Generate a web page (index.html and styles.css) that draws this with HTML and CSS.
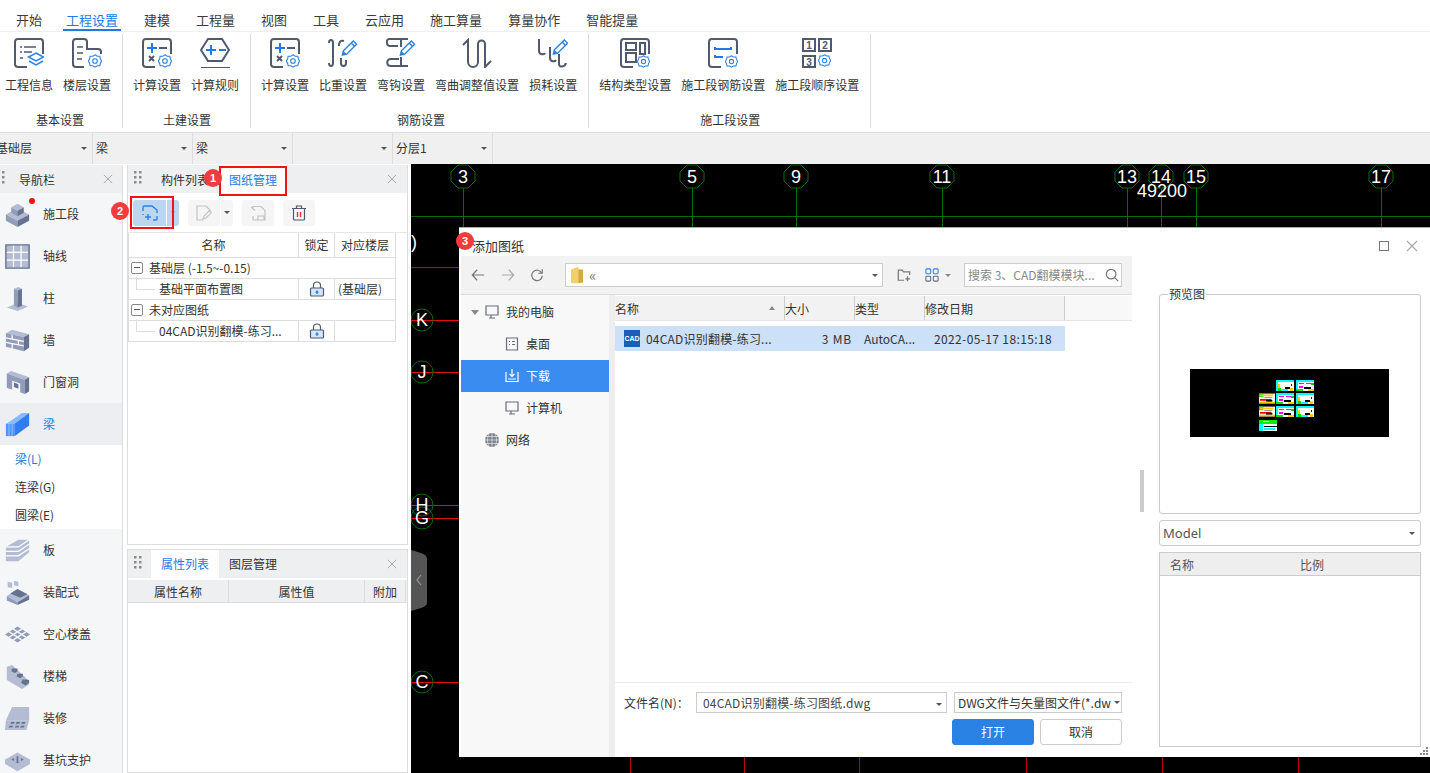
FILE: index.html
```html
<!DOCTYPE html>
<html lang="zh-CN">
<head>
<meta charset="utf-8">
<title>工程设置</title>
<link rel="stylesheet" href="styles.css">
</head>
<body>
<svg class="defs" aria-hidden="true">
  <symbol id="gear" viewBox="0 0 14 14">
    <polygon class="gr" points="7,.8 9.2,2.2 11.8,2.2 12.4,4.7 13.6,7 12.4,9.3 11.8,11.8 9.2,11.8 7,13.2 4.8,11.8 2.2,11.8 1.6,9.3 .4,7 1.6,4.7 2.2,2.2 4.8,2.2"/>
    <circle class="gr" cx="7" cy="7" r="2.3"/>
  </symbol>
  <symbol id="pencil" viewBox="0 0 18 18">
    <path class="pn" d="M13 1.500l3.500 3.500L6 15.500 1.500 16.500 2.500 12z"/>
    <path class="pn" d="M10.800 3.700l3.500 3.500"/>
    <path class="pf" d="M1.500 16.500l1-4.500 3.500 3.500z"/>
  </symbol>
  <symbol id="lock" viewBox="0 0 16 16">
    <path class="lk" d="M4.500 7V4.500a3.500 3.500 0 0 1 7 0V7"/>
    <rect class="lkb" x="1.500" y="7" width="13" height="8" rx="1"/>
    <path class="lka" d="M8 9l2 2.500H8.700V13H7.300v-1.500H6z"/>
  </symbol>
  <symbol id="dots" viewBox="0 0 8 16">
    <path class="dt" d="M0 0h2.500v2.500H0zM5 0h2.500v2.500H5zM0 5h2.500v2.500H0zM5 5h2.500v2.500H5zM0 10h2.500v2.500H0zM5 10h2.500v2.500H5z"/>
  </symbol>
  <symbol id="cross" viewBox="0 0 12 12"><path class="cr" d="M1 1l10 10M11 1L1 11"/></symbol>
  <symbol id="thumbA" viewBox="0 0 18 11">
    <rect width="18" height="11" fill="#fff"/><rect width="18" height="2" fill="#0ff"/><rect y="2" width="2" height="9" fill="#0ff"/><rect y="9" width="12" height="2" fill="#0ff"/><rect x="2" y="4" width="2" height="5" fill="#fc0"/><rect x="2" y="8" width="3" height="3" fill="#0d0"/><rect x="9" y="7" width="5" height="2" fill="#000"/><rect x="14" y="8" width="3" height="3" fill="#fc0"/><rect x="15" y="4" width="1" height="2" fill="#00f"/>
  </symbol>
  <symbol id="thumbB" viewBox="0 0 18 11">
    <rect width="18" height="11" fill="#fff"/><rect width="18" height="2" fill="#0ff"/><rect y="2" width="2" height="7" fill="#0ff"/><rect x="3" y="3" width="5" height="1" fill="#f0f"/><rect x="10" y="3" width="5" height="1" fill="#f0f"/><rect x="3" y="6" width="4" height="2" fill="#f0f"/><rect x="8" y="7" width="7" height="2" fill="#000"/><rect x="12" y="9" width="6" height="2" fill="#fc0"/><rect y="9" width="7" height="2" fill="#0d0"/><rect x="15" y="3" width="3" height="2" fill="#0c0"/>
  </symbol>
  <symbol id="thumbC" viewBox="0 0 18 11">
    <rect width="18" height="11" fill="#fff"/><rect width="5" height="4" fill="#0e0"/><rect x="1" y="1" width="15" height="2" fill="#fc0"/><rect x="6" y="4" width="9" height="1" fill="#888"/><rect x="1" y="6" width="13" height="2" fill="#f00"/><rect y="9" width="18" height="2" fill="#fc0"/><rect x="8" y="7" width="7" height="2" fill="#000"/>
  </symbol>
  <symbol id="thumbD" viewBox="0 0 18 11">
    <rect width="18" height="11" fill="#fff"/><rect width="18" height="4" fill="#0e0"/><rect x="4" y="1" width="6" height="1" fill="#fff"/><rect y="4" width="4" height="7" fill="#0ff"/><rect x="5" y="6" width="13" height="1" fill="#000"/><rect x="5" y="8" width="11" height="2" fill="#0ff"/>
  </symbol>
</svg>

<nav class="tabs">
  <span class="tab tab-first">开始</span>
  <span class="tab tab-on">工程设置</span>
  <span class="tab">建模</span>
  <span class="tab">工程量</span>
  <span class="tab">视图</span>
  <span class="tab">工具</span>
  <span class="tab">云应用</span>
  <span class="tab">施工算量</span>
  <span class="tab">算量协作</span>
  <span class="tab">智能提量</span>
</nav>

<section class="ribbon">
  <div class="group group-first">
    <div class="items">
      <div class="item"><svg class="ic" viewBox="0 0 30 30"><path class="st" d="M13 29H4a3 3 0 0 1-3-3V4a3 3 0 0 1 3-3h22a3 3 0 0 1 3 3v12"/><path class="st1" d="M6 9h2M10 9h12M6 14h2M10 14h8M6 20h3"/><path class="bl" d="M22 15l7.500 4-7.500 4-7.500-4zM15 23l7 4 7-4"/></svg><span>工程信息</span></div>
      <div class="item"><svg class="ic" viewBox="0 0 30 30"><path class="st" d="M12 29H4a3 3 0 0 1-3-3V4a3 3 0 0 1 3-3h8a3 3 0 0 1 3 3v7h11a3 3 0 0 1 3 3v2"/><path class="st1" d="M5 9h6M5 15h6M5 21h5"/><use href="#gear" x="16" y="16" width="14" height="14"/></svg><span>楼层设置</span></div>
    </div>
    <div class="gtitle gtitle-wide">基本设置</div>
  </div>
  <div class="group">
    <div class="items">
      <div class="item"><svg class="ic" viewBox="0 0 30 30"><path class="st" d="M13 29H4a3 3 0 0 1-3-3V4a3 3 0 0 1 3-3h22a3 3 0 0 1 3 3v12"/><path class="bl2" d="M10 5v10M5 10h10"/><path class="st" d="M17 10h8M7 18l5 5M12 18l-5 5"/><use href="#gear" x="16" y="16" width="14" height="14"/></svg><span>计算设置</span></div>
      <div class="item"><svg class="ic" viewBox="0 0 30 30"><path class="st" d="M8 1h14l7 11-7 11H8L1 12zM1 30h29"/><path class="bl2" d="M11 7v10M6 12h10M19 12h7"/></svg><span>计算规则</span></div>
    </div>
    <div class="gtitle">土建设置</div>
  </div>
  <div class="group">
    <div class="items">
      <div class="item"><svg class="ic" viewBox="0 0 30 30"><path class="st" d="M13 29H4a3 3 0 0 1-3-3V4a3 3 0 0 1 3-3h22a3 3 0 0 1 3 3v12"/><path class="bl2" d="M10 5v10M5 10h10"/><path class="st" d="M17 10h8M7 18l5 5M12 18l-5 5"/><use href="#gear" x="16" y="16" width="14" height="14"/></svg><span>计算设置</span></div>
      <div class="item"><svg class="ic" viewBox="0 0 30 30"><path class="st" d="M1 5C1 1 5 1 5 5V25C5 29 1 29 1 25M11 8C11 3 13 2 16 3M13 20V25C13 29 18 29 18 25V22"/><use href="#pencil" x="13" y="1" width="17" height="18"/></svg><span>比重设置</span></div>
      <div class="item"><svg class="ic" viewBox="0 0 30 30"><path class="st" d="M22 1H3C0 1 0 8 4 8H12M15 1V9M13 21H5C0 21 0 28 5 28H22M15 19V28"/><use href="#pencil" x="13" y="1" width="17" height="18"/></svg><span>弯钩设置</span></div>
      <div class="item"><svg class="ic" viewBox="0 0 30 30"><path class="st" d="M1 7L6 2V24a5 5 0 0 0 10 0V6a3.500 3.500 0 0 1 7 0V29L29 23"/></svg><span>弯曲调整值设置</span></div>
      <div class="item"><svg class="ic" viewBox="0 0 30 30"><path class="st" d="M1 1V13C1 17 6 17 7 15M12 9V20C12 24 17 24 18 22M21 16V26C21 30 27 29 28 25"/><use href="#pencil" x="14" y="0" width="17" height="18"/></svg><span>损耗设置</span></div>
    </div>
    <div class="gtitle gtitle-wide">钢筋设置</div>
  </div>
  <div class="group">
    <div class="items">
      <div class="item"><svg class="ic" viewBox="0 0 30 30"><path class="st" d="M13 29H4a3 3 0 0 1-3-3V4a3 3 0 0 1 3-3h22a3 3 0 0 1 3 3v12"/><rect class="st" x="6" y="5" width="10" height="7"/><rect class="st" x="20" y="5" width="5" height="11"/><rect class="st" x="6" y="15" width="10" height="9"/><use href="#gear" x="17" y="17" width="13" height="13"/></svg><span>结构类型设置</span></div>
      <div class="item"><svg class="ic" viewBox="0 0 30 30"><path class="st" d="M13 29H4a3 3 0 0 1-3-3V4a3 3 0 0 1 3-3h22a3 3 0 0 1 3 3v12"/><path class="bl2" d="M7 9v2h16V9M7 17v2h8"/><use href="#gear" x="17" y="17" width="13" height="13"/></svg><span>施工段钢筋设置</span></div>
      <div class="item"><svg class="ic" viewBox="0 0 30 30"><rect class="st" x="1" y="1" width="12" height="12"/><rect class="st" x="17" y="1" width="12" height="12"/><rect class="st" x="1" y="18" width="12" height="11"/><text class="n" x="7" y="11">1</text><text class="n" x="23" y="11">2</text><text class="n" x="7" y="28">3</text><use href="#gear" x="16" y="16" width="13" height="13"/></svg><span>施工段顺序设置</span></div>
    </div>
    <div class="gtitle">施工段设置</div>
  </div>
</section>

<section class="selects">
  <div class="sel">基础层<i class="arr"></i></div>
  <div class="sel">梁<i class="arr"></i></div>
  <div class="sel">梁<i class="arr"></i></div>
  <div class="sel"><i class="arr"></i></div>
  <div class="sel">分层1<i class="arr"></i></div>
</section>

<main class="main">
  <aside class="nav">
    <header class="nav-head">
      <svg class="grip grip-nav"><use href="#dots"/></svg>
      <span class="nav-title">导航栏</span>
      <svg class="x"><use href="#cross"/></svg>
    </header>
    <div class="nav-item"><svg class="ni" viewBox="0 0 28 28"><path class="a" d="M1 14l13-7 13 7-13 7z"/><path class="b" d="M1 14v7l13 7v-7z"/><path class="c" d="M27 14v7l-13 7v-7z"/><path class="a" d="M7 6l7-4 7 4-7 4z"/><path class="b" d="M7 6v6l7 4v-6z"/><path class="c" d="M21 6v6l-7 4v-6z"/></svg><span>施工段</span></div>
    <div class="nav-item"><svg class="ni" viewBox="0 0 28 28"><rect class="a" x="1" y="1" width="26" height="26"/><path class="w" d="M1 9.500h25M1 18h25M9.500 1v25M18 1v25"/><path class="c2" d="M1 1h26v26H1z"/></svg><span>轴线</span></div>
    <div class="nav-item"><svg class="ni" viewBox="0 0 28 28"><path class="a" d="M2 24l12-5 12 4-12 5z"/><path class="a" d="M10 3l5-2 4 2-5 2z"/><path class="b" d="M10 3l4 2v19l-4-2z"/><path class="c" d="M14 5l5-2v19l-5 2z"/></svg><span>柱</span></div>
    <div class="nav-item"><svg class="ni" viewBox="0 0 28 28"><path class="a" d="M1 6l7-4 19 5-6 3z"/><path class="b" d="M1 6l20 4v16L1 21z"/><path class="c" d="M27 7v15l-6 4V10z"/><path class="w" d="M1 11l20 4M1 16l20 4M8 8v4.500M15 14v5M8 18v5"/></svg><span>墙</span></div>
    <div class="nav-item"><svg class="ni" viewBox="0 0 28 28"><path class="a" d="M2 4l5-3 20 7-5 3z"/><path class="b" d="M2 4l20 7v16l-5-2V15l-9-3v10l-6-2z"/><path class="c" d="M27 8v16l-5 3V11z"/><path class="c" d="M10 14l5 2v5l-5-2z"/></svg><span>门窗洞</span></div>
    <div class="nav-item nav-on"><svg class="ni" viewBox="0 0 28 28"><path class="bb" d="M2 13L19 1h8L11 13z"/><path class="bc" d="M1 13h10v14H1z"/><path class="bd" d="M11 13L27 1v14L11 27z"/><path class="w1" d="M4.500 13v14M8 13v14"/></svg><span>梁</span></div>
    <ul class="sub">
      <li class="sub-on">梁(L)</li>
      <li>连梁(G)</li>
      <li>圆梁(E)</li>
    </ul>
    <div class="nav-item"><svg class="ni" viewBox="0 0 28 28"><path class="a" d="M1 10L15 2h12v14L15 26H1z"/><path class="w" d="M1 15h14L27 7M1 20h14L27 12M1 10h14L27 2"/></svg><span>板</span></div>
    <div class="nav-item"><svg class="ni" viewBox="0 0 28 28"><path class="a" d="M2 18l12-8 13 7-13 8z"/><path class="c" d="M6 15l8-5 11 6-8 4z"/><path class="b" d="M2 18v5l12 5v-3z"/><path class="c" d="M27 17v5l-13 6v-3z"/><path class="a" d="M3 2l5 1v6l-5-1zM10 1l5 1v5l-5-1z"/></svg><span>装配式</span></div>
    <div class="nav-item"><svg class="ni" viewBox="0 0 28 28"><path class="b" d="M0 14L14 5l14 9-14 9z"/><path class="w2" d="M4.700 11l14 9M9.300 8l14 9M4.700 17l14-9M9.300 20l14-9"/></svg><span>空心楼盖</span></div>
    <div class="nav-item"><svg class="ni" viewBox="0 0 28 28"><path class="a" d="M2 3l6-2 19 18v4l-8 5L2 18z"/><path class="c" d="M8 5l6 0v3l-3 2-4-2zM14 11l6 0v3l-3 2-4-2zM20 17l7 1v3l-4 3-5-3z"/></svg><span>楼梯</span></div>
    <div class="nav-item"><svg class="ni" viewBox="0 0 28 28"><path class="a" d="M8 1h19v15H1z"/><path class="a" d="M1 16h26l-3 11H0z"/><path class="c" d="M7 18h4l-1 2H6zM13 18h4l-1 2h-4zM19 18h4l-1 2h-4zM5 22h4l-1 2H4zM12 22h4l-1 2h-4zM18 22h4l-1 2h-4z"/></svg><span>装修</span></div>
    <div class="nav-item"><svg class="ni" viewBox="0 0 28 28"><path class="a" d="M0 13L14 5l14 8v5l-14 8L0 18z"/><path class="c" d="M7 13l7-4 7 4-7 4z"/><path class="a" d="M10 9h3v7h-3zM15 9h3v7h-3z"/></svg><span>基坑支护</span></div>
  </aside>

  <div class="side">
    <section class="panel panel-top">
      <header class="phead">
        <svg class="grip"><use href="#dots"/></svg>
        <span class="ptab ptab-plain">构件列表</span>
        <span class="ptab ptab-on ptab-drawing">图纸管理</span>
        <svg class="x x-push"><use href="#cross"/></svg>
      </header>
      <div class="ptools">
        <button class="tbtn tbtn-on"><svg class="ti" viewBox="0 0 16 16"><path class="bl1" d="M1 6V2.500A1.500 1.500 0 0 1 2.500 1H10l5 4v3M15 11v3a1 1 0 0 1-1 1h-3M1 9v1M6 9v6M3 12h6"/></svg><i class="tdiv"></i><i class="arr arr-blue"></i></button>
        <button class="tbtn tbtn-split"><svg class="ti" viewBox="0 0 16 16"><path class="gy" d="M7 15H1V1h9l4 4v2M7 14l1-3 5.500-5.500 2 2L10 13z"/></svg><i class="tdiv"></i><i class="arr"></i></button>
        <button class="tbtn tbtn-icon"><svg class="ti" viewBox="0 0 16 16"><path class="gy" d="M3 5V1.500h8l4 4V15H3v-4M1 2l4 3.500M8 11h6v4H8z"/></svg></button>
        <button class="tbtn tbtn-icon"><svg class="ti" viewBox="0 0 16 16"><path class="dk" d="M1 3.500h14M5.500 3.500V1h5v2.500M2.500 3.500V14a1 1 0 0 0 1 1h9a1 1 0 0 0 1-1V3.500"/><path class="rd" d="M6.500 7v5M9.500 7v5"/></svg></button>
      </div>
      <div class="dtable">
        <div class="dr dr-head"><span>名称</span><span>锁定</span><span>对应楼层</span></div>
        <div class="dr dr-group"><span class="gcell"><i class="minus"></i>基础层 (-1.5~-0.15)</span></div>
        <div class="dr"><span class="ccell"><i class="tline"></i>基础平面布置图</span><span class="lockc"><svg class="lock"><use href="#lock"/></svg></span><span class="lft">(基础层)</span></div>
        <div class="dr dr-group"><span class="gcell"><i class="minus"></i>未对应图纸</span></div>
        <div class="dr"><span class="ccell"><i class="tline"></i>04CAD识别翻模-练习...</span><span class="lockc"><svg class="lock"><use href="#lock"/></svg></span><span></span></div>
      </div>
    </section>
    <section class="panel panel-bot">
      <header class="phead">
        <svg class="grip"><use href="#dots"/></svg>
        <span class="ptab ptab-on ptab-attr">属性列表</span>
        <span class="ptab ptab-layer">图层管理</span>
        <svg class="x x-push"><use href="#cross"/></svg>
      </header>
      <div class="attr-head"><span class="ah1">属性名称</span><span class="ah2">属性值</span><span class="ah3">附加</span></div>
    </section>
  </div>

  <div class="canvas">
    <svg class="cad" viewBox="411 164 1019 609">
      <path class="gl" d="M411 216.500h1019M411 267.500h48M463.500 188v39M692.500 188v39M796.500 188v39M942.500 188v39M1127.500 188v39M1161.500 188v39M1196.500 188v39M1381.500 188v39"/>
      <path class="rl" d="M411 320.500h48M411 372.500h48M411 505.500h48M411 518.500h48M411 682.500h48"/>
      <path class="rl2" d="M630.500 757v16M744.500 757v16M859.500 757v16M1026.500 757v16M1162.500 757v16M1298.500 757v16"/>
      <g class="ring">
        <polygon points="458,165 468,165 475,172 475,181 468,188 458,188 451,181 451,172"/>
        <polygon points="687,165 697,165 704,172 704,181 697,188 687,188 680,181 680,172"/>
        <polygon points="791,165 801,165 808,172 808,181 801,188 791,188 784,181 784,172"/>
        <polygon points="937,165 947,165 954,172 954,181 947,188 937,188 930,181 930,172"/>
        <polygon points="1122,165 1132,165 1139,172 1139,181 1132,188 1122,188 1115,181 1115,172"/>
        <polygon points="1156,165 1166,165 1173,172 1173,181 1166,188 1156,188 1149,181 1149,172"/>
        <polygon points="1191,165 1201,165 1208,172 1208,181 1201,188 1191,188 1184,181 1184,172"/>
        <polygon points="1376,165 1386,165 1393,172 1393,181 1386,188 1376,188 1369,181 1369,172"/>
        <circle cx="422" cy="320" r="11"/><circle cx="422" cy="372" r="11"/><circle cx="422" cy="505" r="11"/><circle cx="422" cy="518" r="11"/><circle cx="422" cy="682" r="11"/>
      </g>
      <g class="lbl">
        <text x="463" y="183">3</text><text x="692" y="183">5</text><text x="796" y="183">9</text><text x="942" y="183">11</text><text x="1127" y="183">13</text><text x="1161" y="183">14</text><text x="1196" y="183">15</text><text x="1381" y="183">17</text>
        <text x="1162" y="197">49200</text><text x="414" y="248">)</text>
        <text x="422" y="326">K</text><text x="422" y="378">J</text><text x="422" y="511">H</text><text x="422" y="524">G</text><text x="422" y="688">C</text>
      </g>
      <path class="handle" d="M411 550l10 3q6 2 6 6v44q0 3-6 5l-10 3z"/>
      <path class="chev" d="M421 575l-4 5 4 5"/>
    </svg>

    <div class="dialog">
      <header class="dlg-title">
        <span class="dlg-name">添加图纸</span>
        <i class="maxbox"></i>
        <svg class="dlg-x"><use href="#cross"/></svg>
      </header>
      <div class="dlg-body">
        <div class="browser">
          <div class="b-tools">
            <svg class="bt bt-back" viewBox="0 0 16 16"><path class="gt" d="M15 8H2M7 2L1.500 8 7 14"/></svg>
            <svg class="bt bt-fwd" viewBox="0 0 16 16"><path class="gt2" d="M1 8h13M9 2l5.500 6L9 14"/></svg>
            <svg class="bt bt-ref" viewBox="0 0 16 16"><path class="gt" d="M13.500 6A6 6 0 1 0 14 9M14 1.500V6H9.500"/></svg>
            <div class="addr">
              <svg class="folder" viewBox="0 0 14 18"><path class="f2" d="M7 3h6v14l-6 1z"/><path class="f1" d="M0 3l8-3v18H1l-1-1z"/></svg>
              <span class="chevs">«</span><i class="arr arr-end"></i>
            </div>
            <svg class="bt bt-new" viewBox="0 0 16 16"><path class="gt" d="M8 14H1.500V2.500H6l1.500 2h7V8M12 9.500V15M9.500 12.500H15"/></svg>
            <svg class="bt bt-grid" viewBox="0 0 16 16"><rect class="blt" x="1" y="1" width="5.500" height="5.500" rx="1"/><rect class="blt" x="9.500" y="1" width="5.500" height="5.500" rx="1"/><rect class="gt1" x="1" y="9.500" width="5.500" height="5.500" rx="1"/><rect class="gt1" x="9.500" y="9.500" width="5.500" height="5.500" rx="1"/></svg>
            <i class="arr arr-grid"></i>
            <div class="search"><span>搜索 3、CAD翻模模块...</span><svg class="mag" viewBox="0 0 16 16"><circle class="gt" cx="7" cy="7" r="5.500"/><path class="gt" d="M11 11l4 4"/></svg></div>
          </div>
          <div class="b-main">
            <ul class="places">
              <li class="pl1"><i class="tri"></i><svg class="pi" viewBox="0 0 14 14"><path class="gt1" d="M1 1h12v9H1zM4 13h6M6 10v3"/></svg>我的电脑</li>
              <li class="pl2"><svg class="pi" viewBox="0 0 14 14"><path class="gt1" d="M1.500 1h11v12h-11zM4 4.500h1M7 4.500h3M4 7.500h1M7 7.500h3"/></svg>桌面</li>
              <li class="pl2 pl-on"><svg class="pi" viewBox="0 0 14 14"><path class="wt" d="M1 3v9.500h12V3M7 0v7M4.500 5L7 7.500 9.500 5M3 10h8"/></svg>下载</li>
              <li class="pl2"><svg class="pi" viewBox="0 0 14 14"><path class="gt1" d="M1 1h12v9H1zM4 13h6M6 10v3"/></svg>计算机</li>
              <li class="pl3"><svg class="pi" viewBox="0 0 14 14"><circle class="gtf" cx="7" cy="7" r="7"/><path class="wt1" d="M0 7h14M1 3.500h12M1 10.500h12M7 0v14M4 1c-2 3-2 9 0 12M10 1c2 3 2 9 0 12"/></svg>网络</li>
            </ul>
            <div class="files">
              <div class="fhead"><span class="c-name">名称<i class="up"></i></span><span class="c-size">大小</span><span class="c-type">类型</span><span class="c-date">修改日期</span><span class="c-rest"></span></div>
              <div class="frow">
                <span class="f-name"><span class="cadi">CAD</span>04CAD识别翻模-练习...</span>
                <span class="f-size">3 MB</span>
                <span class="f-type">AutoCA...</span>
                <span class="f-date">2022-05-17 18:15:18</span>
              </div>
              <div class="ffoot">
                <div class="ffr">
                  <span class="fl">文件名(N)：</span>
                  <div class="fin">04CAD识别翻模-练习图纸.dwg<i class="arr arr-end"></i></div>
                  <div class="fty">DWG文件与矢量图文件(*.dw<i class="arr arr-end2"></i></div>
                </div>
                <div class="fbtns"><button class="btn btn-pri">打开</button><button class="btn">取消</button></div>
              </div>
            </div>
          </div>
        </div>
        <i class="sbar"></i>
        <div class="pv">
          <div class="pv-box">
            <span class="legend">预览图</span>
            <svg class="pv-img" viewBox="0 0 199 68">
              <rect width="199" height="68" fill="#000"/>
              <use href="#thumbA" x="86" y="11" width="18" height="11"/><use href="#thumbB" x="106" y="11" width="18" height="11"/>
              <use href="#thumbC" x="69" y="24" width="16" height="11"/><use href="#thumbB" x="86" y="24" width="18" height="11"/><use href="#thumbA" x="106" y="24" width="18" height="11"/>
              <use href="#thumbC" x="69" y="37" width="16" height="11"/><use href="#thumbB" x="86" y="37" width="18" height="11"/><use href="#thumbA" x="106" y="37" width="18" height="11"/>
              <use href="#thumbD" x="69" y="51" width="18" height="11"/>
            </svg>
          </div>
          <div class="pv-sel">Model<i class="arr arr-end"></i></div>
          <div class="pv-tbl"><div class="pv-th"><span class="pv-a">名称</span><span>比例</span></div></div>
        </div>
      </div>
      <svg class="rsz" viewBox="0 0 8 8"><path d="M6 0h2v2H6zM3 3h2v2H3zM6 3h2v2H6zM0 6h2v2H0zM3 6h2v2H3zM6 6h2v2H6z"/></svg>
    </div>
  </div>
</main>

<i class="box box1"></i>
<i class="box box2"></i>
<b class="badge badge1">1</b>
<b class="badge badge2">2</b>
<b class="badge badge3">3</b>
<i class="reddot"></i>
</body>
</html>
```

FILE: styles.css
```css
* { box-sizing: border-box; }
html, body { margin: 0; padding: 0; }
body {
  position: relative;
  width: 1430px;
  height: 773px;
  overflow: hidden;
  display: flex;
  flex-direction: column;
  background: #fff;
  color: #333;
  font: 12px/16px "Noto Sans CJK SC", "Noto Sans", sans-serif;
}
i, b { font-style: normal; }
ul { list-style: none; margin: 0; padding: 0; }
button { font: inherit; color: inherit; padding: 0; border: 0; }
svg { display: block; flex: none; }
.defs { position: absolute; width: 0; height: 0; }

/* shared strokes */
.st, .st1, .bl, .bl1, .bl2, .gr, .gy, .dk, .rd, .gt, .gt1, .gt2, .blt, .wt, .wt1, .lk, .cr, .pn { fill: none; }
.st { stroke: #4f5a6e; stroke-width: 2; }
.st1 { stroke: #4f5a6e; stroke-width: 1.6; }
.bl { stroke: #2a82e4; stroke-width: 1.5; fill: #fff; }
.bl1 { stroke: #2a82e4; stroke-width: 1.4; }
.bl2 { stroke: #1f7ae6; stroke-width: 2; }
.gr { stroke: #2a82e4; stroke-width: 1.1; fill: #fff; }
.pn { stroke: #2a82e4; stroke-width: 1.5; fill: #fff; }
.pf { fill: #2a82e4; }
.n { font: 700 10px "Liberation Sans", sans-serif; fill: #4f5a6e; text-anchor: middle; }
.gy { stroke: #c4c4c4; stroke-width: 1.2; }
.dk { stroke: #4f5a6e; stroke-width: 1.2; }
.rd { stroke: #e33; stroke-width: 1.4; }
.gt { stroke: #777; stroke-width: 1.4; }
.gt1 { stroke: #666c78; stroke-width: 1.2; }
.gt2 { stroke: #aaa; stroke-width: 1.4; }
.gtf { fill: #7c828f; }
.blt { stroke: #2a82e4; stroke-width: 1.2; }
.wt { stroke: #fff; stroke-width: 1.2; }
.wt1 { stroke: #e8e8e8; stroke-width: .7; }
.lk { stroke: #4f5a6e; stroke-width: 1.2; }
.lkb { fill: #d5e5fb; stroke: #4f5a6e; stroke-width: 1.2; }
.lka { fill: #2a82e4; }
.dt { fill: #8a8a8a; }
.cr { stroke: #aaa; stroke-width: 1.2; }

/* menu tabs */
.tabs {
  flex: none;
  height: 32px;
  display: flex;
  gap: 26px;
  padding: 12px 0 0 16px;
  border-bottom: 1px solid #eee;
  font-size: 13px;
}
.tab { position: relative; height: 16px; line-height: 16px; color: #3b3b3b; }
.tab-first { margin-right: -2px; }
.tab-on { color: #1f7ae6; }
.tab-on::after {
  content: "";
  position: absolute;
  left: -3px;
  right: -3px;
  top: 17px;
  height: 2px;
  background: #1f7ae6;
}

/* ribbon */
.ribbon {
  flex: none;
  height: 100px;
  display: flex;
  padding: 2px 0 4px;
}
.group {
  display: flex;
  flex-direction: column;
  padding: 0 11px 0 10px;
  border-right: 1px solid #dcdcdc;
  height: 94px;
}
.group-first { padding-left: 5px; }
.items { display: flex; gap: 10px; }
.item {
  display: flex;
  flex-direction: column;
  align-items: center;
  padding-top: 4px;
  white-space: nowrap;
}
.ic { width: 30px; height: 30px; margin-bottom: 9px; }
.gtitle { margin-top: auto; text-align: center; height: 16px; padding-left: 2px; }
.gtitle-wide { padding-left: 4px; }

/* filter strip */
.selects {
  flex: none;
  height: 32px;
  display: flex;
  margin-left: -7px;
  margin-right: -7px;
  background: #f0f0f0;
  border-top: 1px solid #ddd;
}
.sel {
  position: relative;
  width: 100px;
  padding: 7px 0 0 3px;
  border-right: 1px solid #ddd;
}
.arr {
  display: inline-block;
  width: 0;
  height: 0;
  border: 3px solid transparent;
  border-top: 3px solid #555;
  border-bottom: 0;
}
.sel .arr { position: absolute; right: 5px; top: 14px; }

/* main */
.main { flex: 1; min-height: 0; display: flex; }
.nav {
  width: 123px;
  flex: none;
  margin-top: 1px;
  background: #f5f6f8;
  border-right: 1px solid #ddd;
  overflow: hidden;
}
.nav-head {
  height: 28px;
  display: flex;
  align-items: center;
  background: #eeeff1;
  padding-right: 9px;
}
.grip { width: 8px; height: 16px; }
.grip-nav { margin-left: -3px; }
.nav-title { margin-left: 14px; flex: 1; padding-top: 2px; }
.x { width: 10px; height: 10px; }
.x-push { margin-left: auto; margin-right: 10px; }
.nav-item {
  height: 42px;
  display: flex;
  align-items: center;
  gap: 13px;
  padding-left: 5px;
}
.nav-on { background: #eceef1; color: #1f7ae6; }
.ni { width: 25px; height: 25px; }
.a { fill: #b3bcd3; }
.b { fill: #919cba; }
.c { fill: #66728f; }
.c2 { fill: none; stroke: #66728f; stroke-width: 1.6; }
.w { fill: none; stroke: #fff; stroke-width: 1.4; }
.w1 { fill: none; stroke: #9cc4ff; stroke-width: 1; }
.w2 { fill: none; stroke: #f5f6f8; stroke-width: 1.6; }
.bb { fill: #8ab9ff; }
.bc { fill: #4c95ff; }
.bd { fill: #2f7df0; }
.sub { background: #fff; padding: 0 0 0 15px; height: 84px; }
.sub li { height: 28px; line-height: 28px; }
.sub-on { color: #1f7ae6; }

/* panels */
.side {
  width: 281px;
  flex: none;
  margin: 1px 3px 0 4px;
  display: flex;
  flex-direction: column;
  gap: 4px;
}
.panel { border: 1px solid #ddd; border-top: 0; }
.panel-top { height: 380px; }
.panel-top .ptab { padding-top: 2px; }
.panel-bot { flex: 1; border-top: 1px solid #ddd; }
.phead {
  height: 28px;
  display: flex;
  align-items: stretch;
  background: #eeeff1;
  padding-left: 5px;
}
.phead .grip { align-self: center; margin-left: 1px; }
.phead .x { align-self: center; }
.ptab { display: flex; align-items: center; justify-content: center; }
.ptab-on { background: #fff; color: #1f7ae6; }
.ptab-plain { margin-left: 19px; width: 48px; }
.ptab-drawing { margin-left: 10px; width: 68px; }
.ptab-attr { margin-left: 9px; width: 68px; }
.ptab-layer { margin-left: 10px; width: 48px; }
.ptools {
  height: 40px;
  display: flex;
  align-items: center;
  gap: 9px;
  padding: 0 0 0 5px;
  border-bottom: 1px solid #e6e6e6;
}
.tbtn {
  height: 26px;
  display: flex;
  align-items: center;
  background: #f5f5f5;
  border-radius: 3px;
}
.tbtn-on { width: 46px; background: #bcd6f0; padding-left: 9px; }
.tbtn-split { width: 45px; padding-left: 8px; }
.tbtn-icon { width: 32px; justify-content: center; }
.tdiv { width: 1px; height: 26px; margin: 0 3px 0 8px; background: #fff; }
.ti { width: 16px; height: 16px; }
.arr-blue { border-top-color: #9dbbdc; }
.dtable { width: 268px; }
.dr {
  height: 21px;
  display: grid;
  grid-template-columns: 169px 36px 61px;
  border-bottom: 1px solid #ddd;
  border-right: 1px solid #ddd;
  border-left: 1px solid #ddd;
  line-height: 20px;
  white-space: nowrap;
}
.dr > span + span { border-left: 1px solid #ddd; }
.dr-head { height: 25px; text-align: center; line-height: 24px; }
.dr-group { display: block; }
.gcell { display: flex; align-items: center; }
.ccell { display: flex; align-items: center; }
.minus {
  position: relative;
  width: 12px;
  height: 12px;
  margin: 0 6px 0 2px;
  border: 1px solid #888;
  border-radius: 2px;
}
.minus::after {
  content: "";
  position: absolute;
  left: 2px;
  right: 2px;
  top: 4px;
  height: 1px;
  background: #555;
}
.tline {
  width: 19px;
  height: 13px;
  margin: -12px 4px 0 7px;
  border-left: 1px solid #ddd;
  border-bottom: 1px solid #ddd;
}
.lockc { display: flex; align-items: center; justify-content: center; }
.lock { width: 16px; height: 16px; }
.lft { padding-left: 3px; }
.attr-head {
  height: 25px;
  display: flex;
  background: #eeeff1;
  border-top: 2px solid #fff;
  border-bottom: 1px solid #ddd;
  line-height: 24px;
  text-align: center;
}
.ah1 { width: 101px; border-right: 1px solid #ddd; }
.ah2 { width: 136px; border-right: 1px solid #ddd; }
.ah3 { width: 41px; border-right: 1px solid #ddd; }

/* CAD canvas */
.canvas { position: relative; flex: 1; background: #000; overflow: hidden; }
.cad { position: absolute; left: 0; top: 0; width: 1019px; height: 609px; }
.gl { stroke: #086a08; stroke-width: 1; fill: none; }
.rl { stroke: #e01010; stroke-width: 1; fill: none; }
.rl2 { stroke: #b80808; stroke-width: 1; fill: none; }
.ring { fill: none; stroke: #086a08; stroke-width: 1; }
.lbl { fill: #fff; font: 18px "Liberation Sans", sans-serif; text-anchor: middle; }
.handle { fill: #555; }
.chev { fill: none; stroke: #999; stroke-width: 1.2; }

/* dialog */
.dialog {
  position: absolute;
  left: 48px;
  top: 63px;
  right: 0;
  bottom: 16px;
  background: #fff;
  border-top: 1px solid #aaa;
  display: flex;
  flex-direction: column;
}
.dlg-title {
  flex: none;
  height: 28px;
  display: flex;
  align-items: center;
  padding: 8px 12px 0 13px;
}
.dlg-name { font-size: 13px; flex: 1; }
.maxbox { width: 10px; height: 10px; border: 1px solid #777; margin-right: 17px; }
.dlg-x { width: 12px; height: 12px; }
.dlg-body { flex: 1; min-height: 0; display: flex; }
.browser {
  width: 671px;
  margin-left: 2px;
  flex: none;
  display: flex;
  flex-direction: column;
}
.b-tools {
  flex: none;
  height: 39px;
  display: flex;
  align-items: center;
  background: #f2f2f2;
  border-bottom: 1px solid #ddd;
  padding-left: 10px;
}
.bt { width: 14px; height: 14px; }
.bt-fwd { margin-left: 16px; }
.bt-ref { margin-left: 15px; }
.addr {
  position: relative;
  width: 318px;
  height: 24px;
  margin-left: 21px;
  display: flex;
  align-items: center;
  padding-left: 5px;
  background: #fff;
  border: 1px solid #ccc;
}
.folder { width: 13px; height: 18px; }
.f1 { fill: #f2cf6a; }
.f2 { fill: #d6a93f; }
.chevs { margin-left: 5px; color: #777; font-size: 15px; }
.arr-end { position: absolute; right: 4px; top: 10px; }
.bt-new { margin-left: 14px; }
.bt-grid { margin-left: 14px; }
.arr-grid { margin-left: 6px; border-top-color: #888; }
.search {
  position: relative;
  width: 158px;
  height: 24px;
  margin-left: 13px;
  padding: 3px 0 0 3px;
  background: #fff;
  border: 1px solid #ccc;
  color: #888;
  white-space: nowrap;
  overflow: hidden;
}
.mag { position: absolute; right: 2px; top: 4px; width: 14px; height: 14px; }
.b-main { flex: 1; min-height: 0; display: flex; }
.places {
  width: 154px;
  flex: none;
  padding-top: 1px;
  background: #f8f8f8;
  border-right: 6px solid #eee;
}
.places li { position: relative; height: 32px; display: flex; align-items: center; }
.pi { width: 14px; height: 14px; margin-right: 7px; }
.pl1, .pl3 { padding-left: 24px; }
.pl2 { padding-left: 44px; }
.pl-on { background: #3b8cf0; color: #fff; }
.tri {
  position: absolute;
  left: 10px;
  top: 14px;
  border: 4px solid transparent;
  border-top: 5px solid #888;
  border-bottom: 0;
}
.files { flex: 1; min-width: 0; display: flex; flex-direction: column; }
.fhead {
  flex: none;
  height: 25px;
  margin-top: 1px;
  display: flex;
  background: #f2f2f2;
  border-bottom: 1px solid #e4e4e4;
  line-height: 25px;
}
.fhead span { border-right: 1px solid #ccc; }
.c-name { position: relative; width: 170px; }
.c-size, .c-type { width: 70px; }
.c-date { width: 140px; }
.fhead .c-rest { flex: 1; border-right: 0; background: #f8f8f8; }
.up {
  position: absolute;
  right: 9px;
  top: 10px;
  border: 3px solid transparent;
  border-bottom: 4px solid #888;
  border-top: 0;
}
.frow {
  flex: none;
  width: 450px;
  height: 25px;
  margin-top: 5px;
  display: flex;
  align-items: center;
  background: #cce0f8;
  white-space: nowrap;
}
.f-name { width: 170px; display: flex; align-items: center; padding-left: 9px; letter-spacing: .2px; }
.cadi {
  width: 16px;
  height: 17px;
  margin-right: 6px;
  background: #1a5fb4;
  color: #fff;
  font: 700 7px/17px "Liberation Sans", sans-serif;
  letter-spacing: 0;
  text-align: center;
  overflow: hidden;
}
.f-size { width: 67px; text-align: right; letter-spacing: .8px; }
.f-type { width: 70px; margin-left: 12px; }
.f-date { letter-spacing: .37px; }
.ffoot {
  margin-top: auto;
  height: 75px;
  flex: none;
  border-top: 1px solid #eee;
  padding-top: 9px;
}
.ffr { display: flex; height: 21px; align-items: center; }
.fl { width: 81px; padding-left: 9px; white-space: nowrap; }
.fin, .fty {
  position: relative;
  height: 21px;
  line-height: 19px;
  border: 1px solid #ccc;
  white-space: nowrap;
  overflow: hidden;
}
.fin { width: 251px; padding-left: 6px; color: #444; letter-spacing: .2px; }
.fty { width: 168px; margin-left: 7px; padding-left: 3px; }
.arr-end2 { position: absolute; right: 1px; top: 8px; }
.fbtns { display: flex; justify-content: flex-end; gap: 6px; margin: 6px 10px 0 0; }
.btn {
  width: 82px;
  height: 26px;
  background: #fff;
  border: 1px solid #ccc;
  border-radius: 3px;
}
.btn-pri { background: #2a82e4; border-color: #2a82e4; color: #fff; }
.sbar { width: 4px; height: 42px; margin: 214px 15px 0 8px; background: #ccc; flex: none; }
.pv { width: 262px; flex: none; padding-top: 38px; display: flex; flex-direction: column; }
.pv-box {
  position: relative;
  height: 220px;
  flex: none;
  padding: 74px 0 0 30px;
  border: 1px solid #ccc;
  border-radius: 3px;
}
.legend {
  position: absolute;
  left: 8px;
  top: -9px;
  padding: 0 1px;
  background: #fff;
}
.pv-img { width: 199px; height: 68px; }
.pv-sel {
  position: relative;
  height: 26px;
  flex: none;
  margin-top: 6px;
  padding: 4px 0 0 3px;
  border: 1px solid #ccc;
  border-radius: 3px;
  font: 13px/16px "Noto Sans", sans-serif;
  color: #555;
}
.pv-sel .arr-end { right: 5px; top: 11px; }
.pv-tbl { height: 195px; flex: none; margin-top: 6px; border: 1px solid #ccc; }
.pv-th {
  height: 23px;
  display: flex;
  background: #eee;
  border-bottom: 1px solid #ccc;
  line-height: 24px;
  padding-left: 10px;
  color: #555;
}
.pv-a { width: 130px; }
.rsz { position: absolute; right: 2px; bottom: 2px; width: 8px; height: 8px; fill: #888; }

/* annotation overlays */
.box { position: absolute; border: 2px solid #f01414; }
.box1 { left: 219px; top: 166px; width: 68px; height: 30px; }
.box2 { left: 130px; top: 196px; width: 44px; height: 33px; }
.badge {
  position: absolute;
  width: 18px;
  height: 18px;
  border-radius: 50%;
  background: #f23c3c;
  color: #fff;
  font: 700 11px/18px "Liberation Sans", sans-serif;
  text-align: center;
}
.badge1 { left: 204px; top: 169px; }
.badge2 { left: 111px; top: 202px; }
.badge3 { left: 456px; top: 232px; }
.reddot {
  position: absolute;
  left: 29px;
  top: 198px;
  width: 6px;
  height: 6px;
  border-radius: 50%;
  background: #f01414;
}
```
